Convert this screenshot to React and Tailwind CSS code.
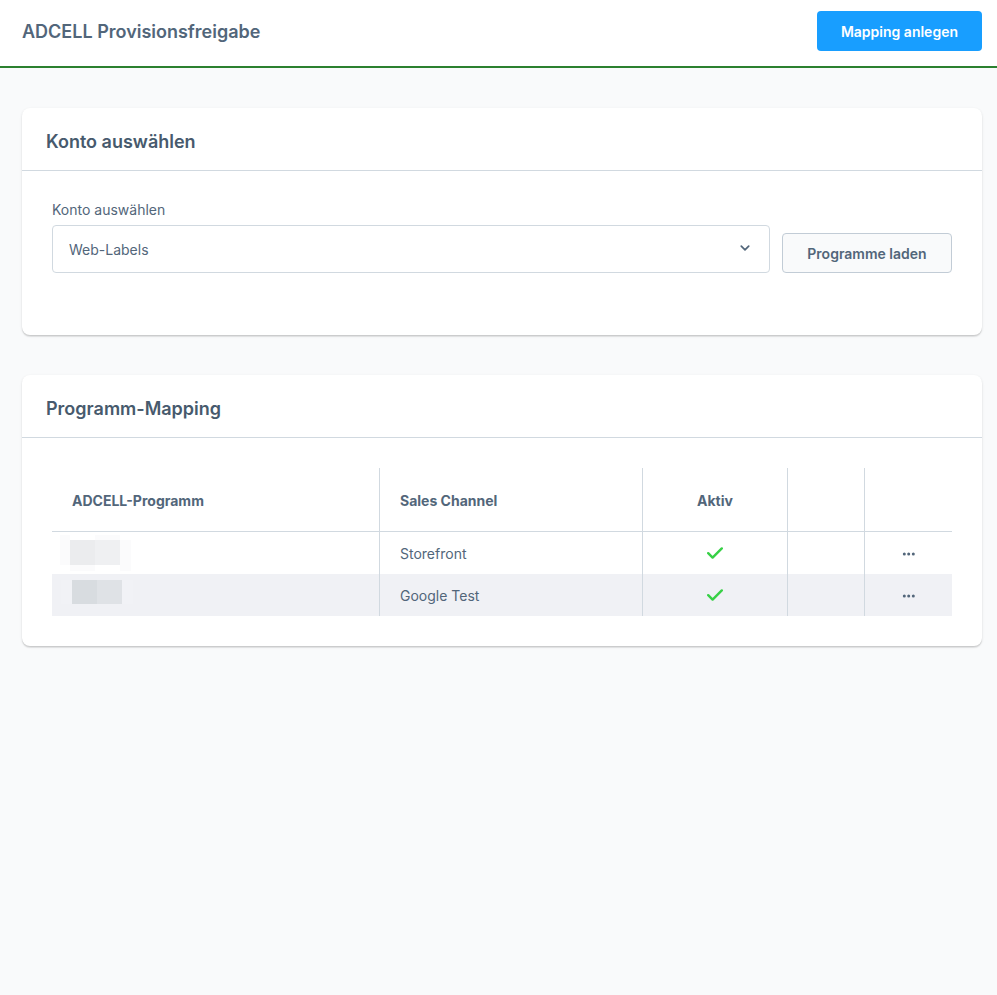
import { useState } from "react";

const mappings = [
  {
    id: 1,
    channel: "Storefront",
    active: true,
    mosaic: [
      { x: 0, y: 3, w: 10, h: 30, fill: "#fbfbfc" },
      { x: 35, y: 3, w: 25, h: 5, fill: "#fbfbfc" },
      { x: 10, y: 33, w: 25, h: 6, fill: "#fbfbfc" },
      { x: 60, y: 8, w: 11, h: 31, fill: "#fbfbfc" },
      { x: 10, y: 8, w: 25, h: 25, fill: "#ebecee" },
      { x: 35, y: 8, w: 25, h: 25, fill: "#eff0f2" },
    ],
  },
  {
    id: 2,
    channel: "Google Test",
    active: true,
    mosaic: [
      { x: 1, y: 6, w: 72, h: 24, fill: "#f1f2f6" },
      { x: 12, y: 6, w: 25, h: 24, fill: "#d8dce0" },
      { x: 37, y: 6, w: 25, h: 24, fill: "#dfe2e6" },
    ],
  },
];

const CheckIcon = () => (
  <svg viewBox="0 0 16 12" className="mx-auto h-3 w-4" fill="none" role="img" aria-label="Aktiv">
    <path
      d="M1.2 6.2 5.6 10.6 14.8 1.4"
      stroke="#37d046"
      strokeWidth="2.4"
      strokeLinecap="round"
      strokeLinejoin="round"
    />
  </svg>
);

const MoreIcon = () => (
  <svg viewBox="0 0 14 4" className="h-1 w-3.5" fill="currentColor" aria-hidden="true">
    <circle cx="2.3" cy="2" r="1.5" />
    <circle cx="6.7" cy="2" r="1.5" />
    <circle cx="11.3" cy="2" r="1.5" />
  </svg>
);

const Card = ({ title, children }) => (
  <section className="rounded-lg bg-white shadow-[0_1px_1px_rgba(0,0,0,0.08),0_2px_1px_rgba(0,0,0,0.06),0_1px_3px_rgba(0,0,0,0.1)]">
    <h2 className="border-b border-[#d1d9e0] px-6 pt-5 pb-3.5 text-lg leading-7 font-semibold text-[#475a6d]">
      {title}
    </h2>
    <div className="p-[30px]">{children}</div>
  </section>
);

const App = () => {
  const [account, setAccount] = useState("web-labels");

  return (
    <div className="min-h-screen bg-[#f9fafb] font-['Inter',sans-serif] text-sm text-[#52667a]">
      <header className="flex items-start justify-between border-b-2 border-[#2b802f] bg-white pt-[11px] pr-[15px] pb-[13px] pl-[22px]">
        <h1 className="text-lg leading-[42px] font-semibold">ADCELL Provisionsfreigabe</h1>
        <button
          type="button"
          className="h-10 rounded bg-[#189eff] px-6 pt-0.5 font-semibold text-white"
        >
          Mapping anlegen
        </button>
      </header>

      <main className="flex flex-col gap-10 pt-10 pr-[15px] pb-10 pl-[22px]">
        <Card title="Konto auswählen">
          <div className="flex items-end gap-3 pb-8">
            <div className="flex-1">
              <label htmlFor="account" className="block pb-1.5 leading-[18px]">
                Konto auswählen
              </label>
              <div className="relative">
                <select
                  id="account"
                  value={account}
                  onChange={(e) => setAccount(e.target.value)}
                  className="block h-12 w-full appearance-none rounded border border-[#d1d9e0] bg-white px-4 pt-0.5"
                >
                  <option value="web-labels">Web-Labels</option>
                </select>
                <svg
                  viewBox="0 0 10 6"
                  className="pointer-events-none absolute top-5 right-5 h-1.5 w-2.5"
                  fill="none"
                  aria-hidden="true"
                >
                  <path
                    d="M1.3 1.2 5 4.8 8.7 1.2"
                    stroke="#52667a"
                    strokeWidth="1.7"
                    strokeLinecap="round"
                    strokeLinejoin="round"
                  />
                </svg>
              </div>
            </div>
            <button
              type="button"
              className="h-10 w-[170px] rounded border border-[#c2ccd6] bg-[#f9fafb] pt-0.5 font-semibold"
            >
              Programme laden
            </button>
          </div>
        </Card>

        <Card title="Programm-Mapping">
          <table className="w-full table-fixed border-separate border-spacing-0">
            <colgroup>
              <col />
              <col className="w-[263px]" />
              <col className="w-[145px]" />
              <col className="w-[77px]" />
              <col className="w-[87px]" />
            </colgroup>
            <thead>
              <tr className="h-16 *:border-b *:border-[#d1d9e0] *:px-5 *:pt-0.5 *:font-bold">
                <th className="border-r text-left">ADCELL-Programm</th>
                <th className="border-r text-left">Sales Channel</th>
                <th className="border-r text-center">Aktiv</th>
                <td className="border-r" />
                <td />
              </tr>
            </thead>
            <tbody>
              {mappings.map((item) => (
                <tr key={item.id} className="h-[42px] *:border-[#d1d9e0] even:bg-[#f0f1f5]">
                  <td className="border-r p-0 pl-2">
                    <svg
                      viewBox="0 0 74 42"
                      className="block h-[42px] w-[74px]"
                      shapeRendering="crispEdges"
                      aria-hidden="true"
                    >
                      {item.mosaic.map((b) => (
                        <rect
                          key={`${b.x}-${b.y}`}
                          x={b.x}
                          y={b.y}
                          width={b.w}
                          height={b.h}
                          fill={b.fill}
                        />
                      ))}
                    </svg>
                  </td>
                  <td className="border-r px-5 pt-0.5 pb-0">{item.channel}</td>
                  <td className="border-r p-0">{item.active && <CheckIcon />}</td>
                  <td className="border-r p-0" />
                  <td className="px-0 pt-0.5 pb-0">
                    <button
                      type="button"
                      aria-label="Aktionen"
                      className="mx-auto flex h-6 w-8 items-center justify-center"
                    >
                      <MoreIcon />
                    </button>
                  </td>
                </tr>
              ))}
            </tbody>
          </table>
        </Card>
      </main>
    </div>
  );
};

export default App;
